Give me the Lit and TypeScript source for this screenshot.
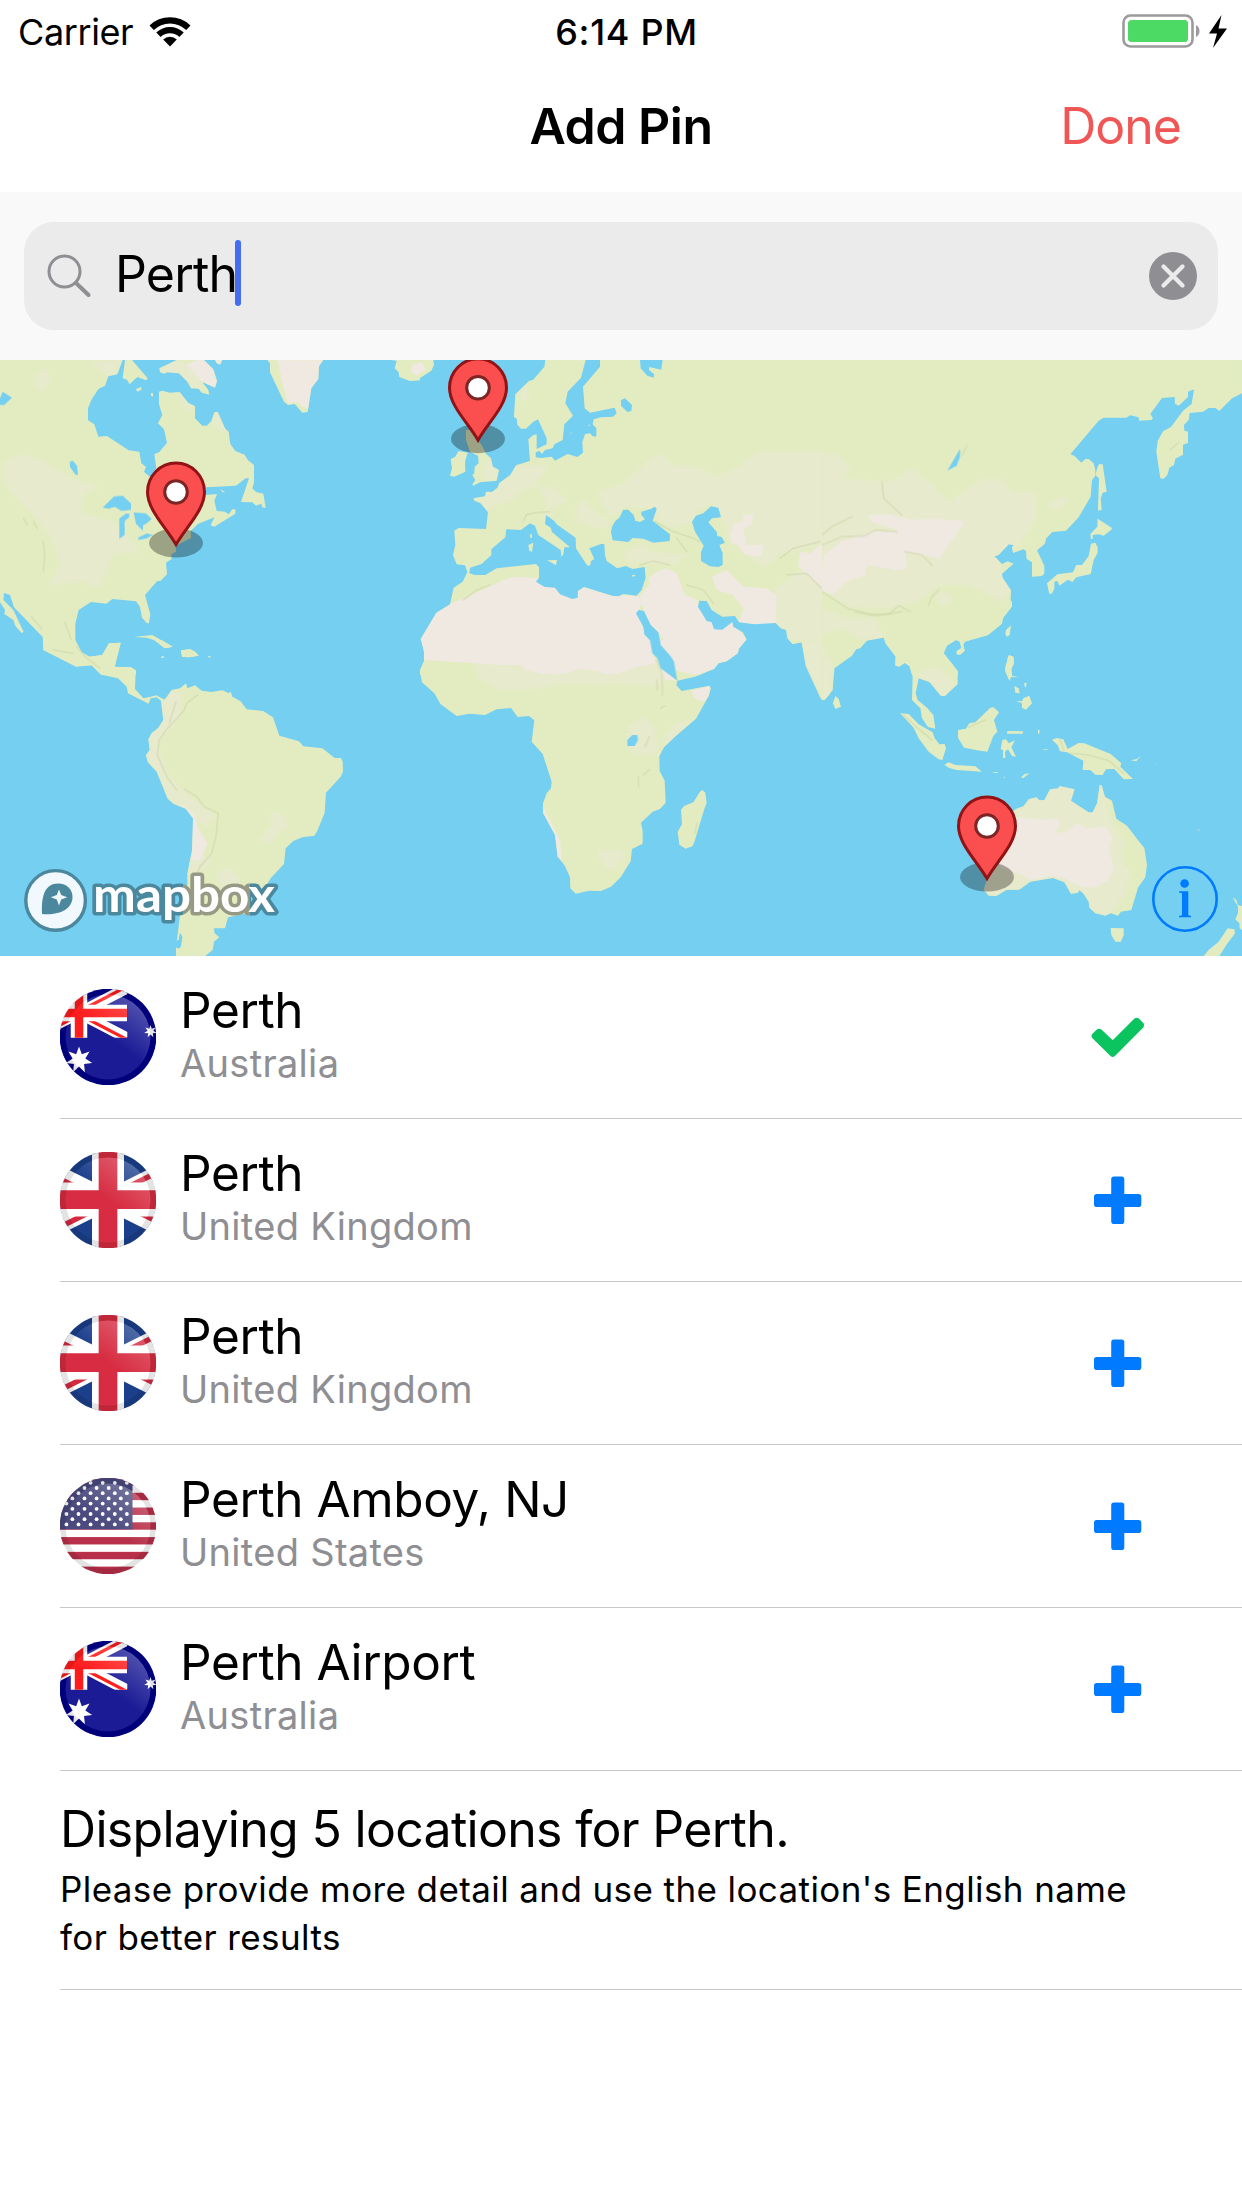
import { LitElement, html, svg, css } from "lit";
import { customElement, property, state } from "lit/decorators.js";

type Country = "au" | "gb" | "us";
interface Place {
  name: string;
  country: string;
  flag: Country;
  added: boolean;
}

/* ---------- map data: each tile is drawn at 3 units per pixel ---------- */
interface Tile {
  x: number;
  y: number;
  land: string[];
  pale?: string[];
  sand?: string[];
  water?: string[];
  isles?: string[];
  ridges?: string[];
}

const TILES: Tile[] = [
  {
    x: 0,
    y: 355,
    land: [
      "0,15 368,15 352,58 325,64 315,92 296,101 275,133 264,160 264,196 283,208 295,245 321,243 386,286 418,290 424,325 438,336 432,350 450,366 469,340 463,298 478,291 501,263 492,223 474,205 487,180 477,148 477,110 487,107 509,113 539,111 565,144 585,153 585,190 607,212 620,212 634,198 643,172 653,170 675,220 686,230 691,267 706,288 734,299 744,316 762,330 762,383 757,400 768,411 790,416 797,459 787,457 784,446 768,452 757,442 723,441 747,370 737,370 708,392 618,397 618,420 651,417 643,437 650,468 675,470 686,478 697,463 706,463 706,476 643,515 632,511 643,487 594,507 572,528 573,549 528,572 528,590 514,598 515,612 498,623 501,658 482,677 471,679 435,720 451,778 447,804 441,805 426,788 420,756 408,739 337,732 319,746 273,741 236,765 226,806 226,860 245,892 268,905 306,900 327,865 362,863 344,936 392,936 408,947 408,960 304,960 275,931 228,935 130,885 128,846 42,757 30,720 12,714 10,735 40,765 71,831 65,834 46,813 40,795 13,777 15,764 0,742",
      "375,15 396,15 443,70 438,76 412,66 389,88 381,74 368,70",
      "408,102 424,96 424,104 412,110",
      "453,114 459,114 459,125 453,122",
      "530,15 478,40 480,52 494,56 500,52 537,55 562,80 573,100 596,101 605,113 628,119 625,105 607,81 645,98 651,78 640,43 612,15",
      "645,15 650,25 660,29 667,15",
      "802,15 810,25 810,52 852,140 864,150 884,147 907,173 923,171 934,100 955,72 957,34 970,15",
      "1172,15 1190,17 1184,40 1196,52 1198,66 1230,78 1260,76 1260,15",
      "402,846 457,840 518,875 494,880 471,858 440,848",
      "543,886 571,883 585,890 596,902 565,907 546,905",
      "484,905 492,904 490,908 484,908",
      "625,904 633,905 632,907 625,907",
      "660,403 676,411 668,412",
    ],
    pale: [
      "270,15 365,15 350,58 320,62 300,45",
      "105,60 135,40 155,70 125,110 108,90",
      "10,320 60,295 125,315 215,370 300,395 250,420 240,470 340,500 420,590 340,600 300,700 240,680 150,690 180,620 150,540 100,480 40,420 10,380",
      "540,113 565,146 583,155 560,170 545,150",
      "643,172 653,170 675,220 684,235 655,222 636,212",
      "530,15 478,40 480,52 494,56 500,52 537,55 562,80 573,100 596,101 605,113 600,70 560,30",
    ],
    sand: [
      "560,30 590,15 612,15 640,43 651,78 645,98 607,81 580,50",
      "832,15 970,15 957,34 955,72 934,100 925,160 908,155 890,140 862,145 848,85",
      "1240,25 1260,20 1260,58 1236,50",
      "645,15 650,25 660,29 667,15",
    ],
    water: [
      "0,130 8,110 36,128 13,150 0,150",
      "209,320 219,318 231,333 234,360 226,358 210,336",
      "308,458 342,424 368,422 393,445 393,465 364,468 345,456 325,461",
      "358,490 378,475 389,477 387,487 374,498 374,540 358,552",
      "401,472 438,475 455,492 440,505 430,510 428,527 408,506",
      "414,548 440,535 459,540 440,550 416,555",
    ],
    ridges: ["130,560 134,600 130,650", "70,490 82,510", "100,500 112,520", "95,785 125,822", "195,803 212,850 245,895", "130,885 220,892"],
  },
  {
    x: 0,
    y: 640,
    land: [
      "130,0 130,30 228,79 275,76 304,104 354,115 380,140 384,160 446,191 452,175 470,172 483,182 490,240 474,265 455,279 445,298 449,330 438,345 443,366 470,395 503,476 520,491 557,506 579,535 576,632 562,700 562,735 548,765 537,850 531,900 528,902 536,900 540,878 547,890 543,920 535,926 528,922 528,948 615,948 638,930 642,905 658,892 644,880 642,865 675,865 684,832 740,820 755,795 757,765 800,735 812,715 852,672 857,625 880,603 907,592 943,587 952,572 974,518 978,458 1022,410 1029,395 1028,365 1023,354 1004,354 967,325 910,319 897,304 838,287 819,232 789,213 740,208 722,184 697,170 692,155 687,160 667,151 634,156 605,152 585,136 562,145 558,130 540,145 515,150 494,179 468,166 452,170 430,175 405,147 407,90 392,82 344,80 362,8 327,10 308,45 268,50 245,37 226,0",
      "462,0 485,0 518,20 494,25",
      "543,31 571,28 585,35 596,47 565,52 546,50",
      "484,50 492,49 490,53 484,53",
      "625,49 633,50 632,52 625,52",
    ],
    pale: [
      "775,600 810,560 815,510 845,520 865,560 830,585 810,615",
      "515,150 494,179 483,182 490,240 455,279 445,298 449,330 438,345 443,366 470,395 503,476 557,506 579,535 620,560 650,530 560,460 500,400 475,310 540,230 545,160",
      "650,700 690,680 720,720 700,760 660,740",
      "560,640 600,640 640,660 600,700 565,700",
    ],
    sand: ["520,491 557,506 579,535 576,632 574,662 600,660 622,610 595,565 585,528 557,500"],
    ridges: [
      "592,165 560,190 552,212 500,268 478,300 472,345 500,410 530,450",
      "528,185 508,248",
      "555,448 590,470 612,500 655,520 648,590 635,640 600,680 590,705",
      "160,30 220,40",
      "230,20 255,50 300,85",
    ],
  },
  {
    x: 410,
    y: 355,
    land: [
      "406,15 403,35 370,74 357,78 316,118 312,185 321,193 322,209 333,221 348,221 370,200 384,193 410,250 410,268 380,282 380,238 370,240 355,253 360,318 318,331 301,360 268,384 263,398 246,411 228,410 225,424 190,430 193,437 212,445 234,472 228,522 146,519 133,527 136,570 129,600 140,628 165,631 172,652 158,680 131,698 120,748 79,773 32,852 42,885 42,918 30,945 30,960 1260,960 1260,15",
      "0,77 20,76 64,47 72,30 70,15 0,15",
      "168,225 190,225 198,250 215,270 228,296 243,310 248,335 267,345 260,377 210,382 190,392 187,388 196,375 187,360 193,355 194,335 206,325 204,302 180,290 168,255",
      "122,312 135,306 146,288 173,293 165,320 166,350 133,365 120,362 126,340",
    ],
    pale: [
      "560,410 640,385 720,310 755,295 790,330 860,335 910,360 960,350 1040,290 1260,290 1260,560 1110,600 1060,640 960,560 930,480 900,450 860,470 850,500 790,520 740,495 740,460 690,460 650,455 600,490",
      "318,331 301,360 268,384 263,398 246,411 228,410 225,424 190,430 212,445 234,472 250,450 300,440 340,400 430,395 470,440 400,470 400,500 430,500 380,380 420,330",
      "325,115 345,90 358,110 352,135 335,140",
      "500,450 520,430 555,470 600,500 590,520 545,515 500,500",
      "640,590 700,565 720,590 830,600 800,630 700,625 650,620",
      "1080,800 1095,700 1180,640 1260,720 1260,960 1198,960 1184,905 1175,862 1148,867 1128,825 1097,804",
      "215,340 240,310 265,345 260,377 220,375",
    ],
    sand: [
      "120,748 210,708 280,675 315,665 378,670 387,668 378,680 403,695 435,698 450,718 487,732 503,728 504,707 522,696 607,722 680,722 700,740 678,775 700,815 703,838 722,858 727,895 742,915 740,925 680,935 620,957 560,947 510,943 460,958 400,957 350,945 360,895 330,930 270,935 150,922 100,915 42,915 42,885 32,852 79,773",
      "690,722 718,690 716,670 740,650 770,640 800,655 825,720 864,735 864,755 905,802 937,824 967,801 1010,853 987,895 950,918 925,925 872,958 835,960 790,900 752,840 722,810 702,768",
      "905,665 950,645 1000,695 1070,700 1100,725 1097,804 1033,808 987,802 1000,760 970,720 920,705",
      "960,540 970,510 1000,500 1000,480 1030,478 1025,510 1000,520 1010,570 1060,570 1055,605 1005,600 985,570 965,565",
      "1170,590 1200,595 1230,570 1260,570 1260,715 1215,680 1165,635",
      "5,30 35,22 48,42 20,62 3,50",
    ],
    water: [
      "527,15 513,68 473,110 466,145 489,182 463,208 458,255 433,268 428,280 405,285 396,297 388,288 377,292 377,307 393,309 425,305 435,317 473,297 502,306 519,293 517,262 525,237 540,235 547,243 559,245 559,220 548,208 551,193 573,187 609,185 620,175 614,158 540,173 524,160 519,95 570,35 570,15",
      "690,15 692,40 712,62 731,68 733,58 717,45 718,36 754,44 758,15",
      "633,135 645,130 666,150 664,168 652,171 633,152",
      "603,530 606,515 616,498 628,488 640,464 655,464 671,480 676,497 690,501 705,493 694,480 694,470 722,462 735,455 740,462 728,497 780,538 779,558 730,563 700,551 668,549 655,561 608,556",
      "846,500 858,482 880,475 903,454 925,458 933,487 906,490 895,502 920,530 922,543 935,546 945,563 928,570 938,595 938,630 925,636 900,634 873,618 873,592 881,572 855,530",
      "180,638 178,655 195,660 226,660 260,640 378,627 387,637 387,668 378,680 403,695 435,698 450,718 487,732 503,728 504,707 522,696 607,722 625,724 640,717 680,722 695,705 707,668 704,636 668,642 648,633 622,640 590,618 585,600 583,568 575,566 538,580 553,612 543,618 540,632 531,631 498,580 497,548 440,508 433,498 408,480 405,507 422,518 426,531 480,577 463,577 460,598 454,606 452,585 385,540 375,512 360,505 333,525 289,523 286,547 244,583 244,600 215,627",
      "678,775 686,765 702,768 722,810 745,832 752,870 785,910 798,960 778,960 750,935 742,910 727,895 722,858 703,838 700,815",
      "1200,960 1184,905 1175,862 1148,867 1132,850 1128,825 1112,820 1097,804 1033,808 987,802 975,783 937,785 905,765 890,738 868,737 864,755 890,798 905,802 912,823 937,824 967,801 970,815 998,832 1010,853 987,880 983,895 950,918 925,925 912,940 872,958 872,960",
    ],
    isles: [
      "360,538 365,537 366,549 361,549",
      "355,570 370,563 366,590 358,588",
      "412,616 441,615 438,631",
      "666,661 677,659 672,665 666,664",
      "480,235 485,232 484,236",
      "533,211 540,209 539,214",
    ],
    ridges: [
      "340,498 350,478 385,472 420,470",
      "160,735 200,705 240,690",
      "735,500 790,530 850,550 870,560",
      "800,550 830,590",
      "690,630 730,618 780,630",
      "830,690 880,705 910,745",
      "1110,610 1150,580 1230,560",
      "1130,660 1190,655 1240,705",
      "750,870 790,915",
    ],
  },
  {
    x: 410,
    y: 640,
    land: [
      "34,0 42,35 42,65 30,95 36,127 73,160 92,193 140,228 178,221 225,225 260,208 303,204 323,231 357,228 373,241 365,305 398,342 425,425 423,445 410,460 399,490 399,518 435,585 443,650 465,678 480,712 481,745 497,761 537,752 573,753 603,740 632,712 662,664 666,627 698,611 698,572 693,548 728,515 750,507 767,488 764,422 749,393 748,349 762,322 795,290 858,236 896,168 903,145 898,137 815,153 799,136 802,122 855,110 912,87 925,70 950,64 983,40 987,25 1008,0",
      "877,450 886,458 890,488 882,510 855,600 848,618 827,626 808,614 803,575 816,553 813,510 822,498 850,487 870,455",
      "1137,0 1148,12 1175,7 1187,77 1233,178 1243,180 1260,162 1260,0",
    ],
    pale: [
      "200,60 330,80 460,100 740,55 750,85 770,105 745,140 640,130 560,135 440,135 350,150 270,150 200,110",
      "655,260 700,230 735,265 745,345 690,345 650,320",
      "760,290 800,250 850,240 800,285 765,320",
      "565,630 640,630 640,660 600,695 570,660",
      "1180,0 1260,0 1260,120 1225,150 1187,77",
    ],
    sand: [
      "34,0 42,35 42,60 150,67 270,75 330,75 350,90 400,102 460,103 510,88 560,92 585,102 620,102 680,80 740,70 727,40 720,0",
      "750,0 752,15 783,50 792,90 855,105 912,87 925,70 950,64 983,40 987,25 1008,0",
      "752,85 768,120 800,122",
      "845,152 898,139 896,168 880,185 852,175",
      "400,490 399,518 435,585 443,650 455,660 450,600 430,560 405,515",
    ],
    water: [
      "720,0 727,40 742,55 752,85 802,122 792,65 783,50 752,15 750,0",
      "652,300 667,285 682,285 684,300 674,318 652,318",
    ],
    ridges: ["738,60 755,95 758,165", "740,120 742,150", "718,290 705,320", "685,410 685,440", "720,388 700,405", "752,205 765,198", "860,550 855,580"],
  },
  {
    x: 822,
    y: 355,
    land: [
      "0,15 1260,15 1260,115 1230,130 1192,168 1180,159 1160,159 1143,170 1103,174 1100,195 1086,210 1087,227 1098,230 1098,264 1083,269 1083,299 1060,311 1056,330 1042,338 1036,360 1024,372 1015,370 1003,290 1007,258 1023,229 1047,216 1083,167 1109,147 1116,103 1098,110 1098,126 1070,152 1059,146 1058,126 1020,129 985,177 993,190 988,195 951,197 950,187 925,181 913,188 845,188 830,197 745,298 757,302 778,323 790,312 800,312 815,325 820,345 820,362 810,375 806,425 770,487 732,527 691,531 673,550 668,567 645,586 667,632 667,655 660,663 630,665 630,622 614,612 612,588 605,583 573,594 570,578 575,570 560,568 530,600 517,604 540,627 557,619 575,626 540,656 541,667 567,706 566,735 570,742 570,755 543,790 540,806 498,841 428,860 423,870 428,887 413,899 404,897 405,888 418,880 413,860 402,855 375,872 365,895 407,948 408,960 270,960 262,933 248,923 232,935 220,932 221,905 190,865 185,848 127,858 115,880 102,883 90,902 37,940 36,960 0,960",
      "827,335 832,327 842,328 854,410 842,413 836,430 839,464 828,467 831,370 820,360",
      "827,491 870,519 868,524 845,542 830,538 812,540 812,552 807,552 805,537 826,515",
      "807,566 820,563 827,577 827,593 815,615 806,657 763,667 751,681 738,674 712,692 706,678 697,680 697,700 690,716 682,716 675,685 706,658 753,652 763,630 780,630 800,603",
      "567,811 563,840 555,845 550,838 552,825",
      "560,901 575,905 576,925 568,940 570,960 556,960 549,940",
    ],
    pale: [
      "0,290 50,300 85,345 60,370 200,380 270,340 310,370 380,440 480,370 540,370 570,410 600,410 640,410 645,490 600,560 573,580 530,600 545,660 567,706 545,740 480,710 440,690 350,690 290,740 200,760 80,755 0,705",
      "680,450 710,425 745,430 715,465 685,465",
      "0,760 80,790 160,790 185,848 127,858 60,820 0,840",
      "335,720 380,710 390,740 360,755",
      "280,880 340,880 365,900 350,950 290,940",
    ],
    sand: [
      "5,600 60,560 150,530 230,525 150,500 140,480 200,478 270,495 330,490 425,498 415,520 380,570 350,612 330,605 250,590 255,640 230,645 135,630 130,660 70,680 35,718 0,705 0,640",
    ],
    water: ["414,281 414,305 404,332 376,347"],
    ridges: [
      "0,540 30,515 90,485",
      "0,570 60,545 130,542 160,525 225,530",
      "0,710 80,762 150,778 200,778 230,752 265,770",
      "100,772 160,782 240,770",
      "320,750 330,725 350,705",
      "250,590 300,600 330,630",
      "180,380 185,430 240,480",
      "420,300 435,270",
      "1045,285 1070,262",
    ],
  },
  {
    x: 822,
    y: 640,
    land: [
      "0,0 137,0 117,22 103,27 90,45 37,83 32,150 8,180 0,180",
      "188,0 221,48 220,76 232,78 248,69 263,77 272,110 270,180 295,205 300,235 318,261 340,266 334,225 315,203 287,180 281,160 290,115 323,127 356,167 368,169 407,133 407,93 365,40 373,17 402,0",
      "413,0 421,12 418,25 404,33 404,43 415,44 428,32 424,15 428,5 443,0",
      "40,168 50,177 57,200 40,207 33,190",
      "234,220 260,222 290,253 332,277 338,295 352,313 368,312 372,325 361,360 350,358 320,335 290,295 275,263",
      "367,374 380,367 400,375 460,379 480,395 403,390 380,383",
      "408,270 432,266 442,250 460,247 505,203 515,202 531,217 516,240 526,275 514,288 496,335 474,332 426,323 408,293",
      "541,300 552,298 560,310 579,301 568,322 582,350 570,348 558,328 549,335 550,354 543,354 543,330 536,328",
      "556,273 603,274 602,281 555,281",
      "648,270 653,270 652,282 648,280",
      "658,328 676,327 676,330",
      "597,412 608,402 623,400 603,415",
      "514,396 528,397 528,399 514,399",
      "545,410 549,411 548,416",
      "563,46 573,50 576,70 567,90 570,107 590,112 568,111 562,122 549,92 555,70 558,50",
      "577,138 590,145 593,160 580,158",
      "607,128 614,130 612,142 608,140",
      "582,183 600,184 605,174 622,167 630,190 612,209 600,203 600,190",
      "690,300 703,294 724,298 737,327 770,309 787,310 866,342 898,370 895,380 933,417 905,418 877,387 852,388 842,405 820,404 805,390 782,390 784,362 735,337 714,334 707,315",
      "926,361 945,357 958,346 943,364",
      "580,508 605,498 620,478 643,472 652,481 667,480 684,448 709,445 712,438 758,448 747,482 800,517 812,517 825,490 833,435 839,436 849,470 870,482 883,536 915,557 940,590 967,624 975,675 970,712 948,743 928,810 897,815 888,827 866,820 850,827 820,820 802,803 800,785 785,762 772,750 768,758 747,762 727,727 693,714 625,725 592,749 553,750 523,768 500,767 485,750 495,718 490,640 560,530",
      "866,864 905,865 905,885 896,906 880,905 868,885",
      "1232,772 1243,780 1247,795 1260,798 1260,870 1253,865 1252,850 1240,838 1248,820 1248,800",
      "1217,865 1238,868 1238,882 1215,912 1192,948 1145,948 1160,930 1190,905",
      "1126,568 1134,570 1130,572",
      "999,369 1002,370 1000,372",
    ],
    pale: [
      "580,508 605,498 620,478 643,472 652,481 667,480 684,448 709,445 712,438 758,448 747,482 800,517 812,517 825,490 833,435 839,436 849,470 858,520 885,570 905,600 900,660 925,700 910,760 870,815 850,827 820,820 802,803 800,785 785,762 772,750 747,762 727,727 693,714 625,725 592,749 553,750 523,768 500,767 485,750 495,718 490,640 560,530",
      "0,15 32,80 32,150 8,180 0,180",
      "290,115 300,90 350,80 400,135 368,169 356,167 323,127",
    ],
    sand: [
      "560,540 600,533 680,540 710,535 712,560 690,580 735,575 765,548 790,565 850,560 870,590 860,630 875,680 860,720 820,742 780,740 727,715 693,708 625,720 600,705 560,690 530,680",
    ],
    ridges: ["745,340 800,345 860,362 905,400", "240,222 285,262 330,300", "440,262 490,240", "715,300 725,330"],
  },
];

const PINS = [
  { x: 176, y: 492 },
  { x: 478, y: 387.7 },
  { x: 987, y: 826 },
];

const star = (cx: number, cy: number, r: number, inner: number) =>
  Array.from({ length: 14 }, (_, i) => {
    const a = (Math.PI * i) / 7 - Math.PI / 2;
    const d = i % 2 ? r * inner : r;
    return `${(cx + d * Math.cos(a)).toFixed(2)},${(cy + d * Math.sin(a)).toFixed(2)}`;
  }).join(" ");

@customElement("world-map")
class WorldMap extends LitElement {
  static styles = css`
    :host { display: block; height: 596px; background: #75cff0; }
    svg { display: block; }
    .land { fill: #e3ecc1; }
    .pale { fill: #e8e9d1; opacity: 0.7; }
    .sand { fill: #f0e9e2; }
    .water { fill: #75cff0; }
    .ridge { fill: none; stroke: #cdd4a8; stroke-width: 5; stroke-linejoin: round; stroke-linecap: round; opacity: 0.5; }
    .wordmark { font: 700 48px Lato, "Open Sans", sans-serif; fill: #fff; stroke: url(#halo); stroke-width: 7px; paint-order: stroke; stroke-linejoin: round; }
  `;

  private shapes(list: string[] | undefined, cls: string) {
    return (list ?? []).map((p) => svg`<polygon class=${cls} points=${p}></polygon>`);
  }

  render() {
    return html`
      <svg width="1242" height="596" viewBox="0 360 1242 596" role="img" aria-label="World map">
        <defs>
          <linearGradient id="halo" gradientUnits="userSpaceOnUse" x1="90" y1="0" x2="280" y2="0">
            <stop offset="0.49" stop-color="#4b889d"></stop>
            <stop offset="0.49" stop-color="#969a84"></stop>
            <stop offset="0.84" stop-color="#969a84"></stop>
            <stop offset="0.84" stop-color="#4b889d"></stop>
          </linearGradient>
          <filter id="soft" x="-5%" y="-5%" width="110%" height="110%"><feGaussianBlur stdDeviation="5"></feGaussianBlur></filter>
          ${TILES.map(
            (t, i) => svg`<clipPath id=${"shore" + i}>${this.shapes(t.land, "")}</clipPath>
              <clipPath id=${"tile" + i}><rect width="1260" height="960"></rect></clipPath>`,
          )}
        </defs>
        ${TILES.map(
          (t, i) => svg`
          <g transform="translate(${t.x} ${t.y}) scale(0.33333)" clip-path=${`url(#tile${i})`}>
            ${this.shapes(t.land, "land")}
            <g clip-path=${`url(#shore${i})`}>
              <g filter="url(#soft)">${this.shapes(t.pale, "pale")}</g>
              ${this.shapes(t.sand, "sand")}
              ${(t.ridges ?? []).map((p) => svg`<polyline class="ridge" points=${p}></polyline>`)}
            </g>
            ${this.shapes(t.water, "water")}
            ${this.shapes(t.isles, "land")}
          </g>`,
        )}
        ${PINS.map(
          (p) => svg`
          <g transform="translate(${p.x} ${p.y})">
            <ellipse cx="0" cy="51" rx="27" ry="14.5" fill="#000" opacity="0.31"></ellipse>
            <path d="M0 52.5C-10 35-28.5 18-28.5 0a28.5 29 0 0 1 57 0C28.5 18 10 35 0 52.5z" fill="#fb4e4e" stroke="#911315" stroke-width="3"></path>
            <circle r="11.3" fill="#fff" stroke="#7d2424" stroke-width="3"></circle>
          </g>`,
        )}
        <g>
          <circle cx="55.6" cy="900.4" r="29.8" fill="#f1f9ff" stroke="#4b889d" stroke-width="3.4"></circle>
          <path d="M42 914C41 896 45 883.500 58 883.500c9 0 14.500 6 14.500 13.500 0 12-13 18.500-30.500 17z" fill="#4b889d"></path>
          <path d="M59 889.500l2.200 5.600 6 2.200-6 2.200-2.200 6-2.200-6-6-2.200 6-2.200z" fill="#f1f9ff"></path>
          <text class="wordmark" x="93" y="912" textLength="182" lengthAdjust="spacingAndGlyphs">mapbox</text>
        </g>
        <g fill="#007aff">
          <circle cx="1185" cy="899" r="31.700" fill="none" stroke="#007aff" stroke-width="2.600"></circle>
          <circle cx="1184.600" cy="883.500" r="4.300"></circle>
          <path d="M1179 891.300h9.300v24l2.700 0.600v1.300h-12v-1.300l3-0.600v-22l-3-0.700z"></path>
        </g>
      </svg>
    `;
  }
}

@customElement("country-flag")
class CountryFlag extends LitElement {
  @property() code: Country = "au";

  static styles = css`
    :host { display: block; width: 96px; height: 96px; }
    svg { display: block; }
  `;

  private australia() {
    return svg`
      <rect width="96" height="96" fill="#00008a"></rect>
      <circle cx="48" cy="48" r="42.500" fill="#1b1b96"></circle>
      <g clip-path="url(#canton)">
        <path d="M-29-1L67 49M-29 49L67-1" stroke="#fff" stroke-width="11"></path>
        <path d="M19 25.500L67 50.500M19 22.500L67-2.500M19 26L-29 51" stroke="#ff1a1a" stroke-width="3.200"></path>
        <path d="M19 0v49M0 24h67" stroke="#fff" stroke-width="16.500"></path>
        <path d="M19 0v49M0 24h67" stroke="#ff1c1c" stroke-width="8.500"></path>
      </g>
      <polygon points=${star(19, 71, 13.5, 0.48)} fill="#fff"></polygon>
      <polygon points=${star(90.5, 42.5, 6.5, 0.45)} fill="#fff"></polygon>`;
  }

  private britain() {
    return svg`
      <rect width="96" height="96" fill="#1c3f8c"></rect>
      <path d="M-48 0L144 96M-48 96L144 0" stroke="#fff" stroke-width="19"></path>
      <path d="M0 24v6l48 24v-6zM96 24v-6L48 42v6zM0 72v6l48-24v-6zM96 72v-6L48 42v6z" fill="#d42a40"></path>
      <path d="M48 0v96" stroke="#fff" stroke-width="32"></path>
      <path d="M0 47.500h96" stroke="#fff" stroke-width="34"></path>
      <path d="M48 0v96M0 47.700h96" stroke="#d72c41" stroke-width="18.700"></path>`;
  }

  private states() {
    const dots = [];
    for (let r = 0; r < 9; r++) {
      const odd = r % 2;
      for (let c = 0; c < (odd ? 5 : 6); c++) {
        dots.push(svg`<circle cx=${6.4 + c * 12.1 + odd * 6} cy=${4.8 + r * 5.2} r="1.900" fill="#fff"></circle>`);
      }
    }
    return svg`
      <rect width="96" height="96" fill="#fff"></rect>
      ${[0, 2, 4, 6, 8, 10, 12].map((n) => svg`<rect y=${n * 7.385} width="96" height="7.385" fill="#b8304a"></rect>`)}
      <rect width="72.500" height="51.300" fill="#4b4b80"></rect>
      ${dots}`;
  }

  render() {
    const art = this.code === "au" ? this.australia() : this.code === "gb" ? this.britain() : this.states();
    return html`
      <svg width="96" height="96" viewBox="0 0 96 96" aria-hidden="true">
        <defs>
          <clipPath id="disc"><circle cx="48" cy="48" r="48.300"></circle></clipPath>
          <clipPath id="canton"><rect width="67.300" height="48.700"></rect></clipPath>
          <linearGradient id="gloss" x1="0.2" y1="0.9" x2="0.8" y2="0.1">
            <stop offset="0.5" stop-color="#fff" stop-opacity="0"></stop>
            <stop offset="1" stop-color="#fff" stop-opacity="0.22"></stop>
          </linearGradient>
        </defs>
        <g clip-path="url(#disc)">
          ${art}
          <circle cx="48" cy="48" r="42.500" fill="url(#gloss)"></circle>
          <circle cx="48" cy="48" r="45.300" fill="none" stroke="#000" stroke-opacity="0.11" stroke-width="5.600"></circle>
        </g>
      </svg>
    `;
  }
}

@customElement("place-row")
class PlaceRow extends LitElement {
  @property({ attribute: false }) place!: Place;

  static styles = css`
    :host { display: block; padding-left: 60px; }
    .row { display: flex; align-items: center; height: 162px; border-bottom: 1px solid #c8c7cc; }
    .text { flex: 1; padding: 0 0 8px 24px; }
    .name { font-size: 49.5px; line-height: 60px; letter-spacing: -0.4px; color: #000; }
    .country { font-size: 38px; line-height: 46px; letter-spacing: 0.3px; color: #8e8e93; }
    .mark { display: block; margin-right: 94px; }
  `;

  render() {
    const p = this.place;
    return html`
      <div class="row">
        <country-flag .code=${p.flag}></country-flag>
        <div class="text">
          <div class="name">${p.name}</div>
          <div class="country">${p.country}</div>
        </div>
        <svg class="mark" width="60" height="60" viewBox="0 0 60 60" aria-hidden="true">
          ${p.added
            ? svg`<path d="M5.500 26.300l4.600-4.500q2.300-1.800 4.600 0L26 32.500 47.800 10.800q2.200-1.700 4.400 0l4.600 4.700q1.500 2 0 4L28 48.500q-2 1.500-4 0L5.500 30.300q-1.600-2 0-4z" transform="translate(-1.300 0.800)" fill="#0bc35f"></path>`
            : svg`<path transform="translate(-0.500 0)" d="M26.500 6.500h7.500q2.800 0 2.800 2.800v14.700h14.200q2.800 0 2.800 2.800v7.400q0 2.800-2.800 2.800H36.800v14.200q0 2.800-2.800 2.800h-7.500q-2.800 0-2.800-2.800V37H9.300q-2.800 0-2.800-2.800v-7.400q0-2.800 2.800-2.800h14.400V9.300q0-2.800 2.800-2.800z" fill="#007aff"></path>`}
        </svg>
      </div>
    `;
  }
}

@customElement("app-root")
class AppRoot extends LitElement {
  @state() private query = "Perth";
  @state() private places: Place[] = [
    { name: "Perth", country: "Australia", flag: "au", added: true },
    { name: "Perth", country: "United Kingdom", flag: "gb", added: false },
    { name: "Perth", country: "United Kingdom", flag: "gb", added: false },
    { name: "Perth Amboy, NJ", country: "United States", flag: "us", added: false },
    { name: "Perth Airport", country: "Australia", flag: "au", added: false },
  ];

  static styles = css`
    :host { display: block; width: 1242px; height: 2208px; overflow: hidden; background: #fff; color: #000; font-family: Inter, Roboto, "Liberation Sans", sans-serif; }
    .bar { display: grid; grid-template-columns: 1fr auto 1fr; align-items: center; }
    .status { height: 60px; padding: 0 14px 0 18px; font-size: 36px; line-height: 60px; }
    .carrier { display: flex; align-items: center; gap: 16px; }
    .carrier span { padding-top: 2px; letter-spacing: -0.4px; }
    .time { padding: 2px 0 0 7px; font-weight: 500; letter-spacing: 0.7px; }
    .power { display: flex; align-items: center; justify-content: flex-end; }
    .nav { height: 132px; padding: 0 61px; font-size: 50px; line-height: 132px; }
    .title { grid-column: 2; font-weight: 600; letter-spacing: -0.5px; }
    .done { justify-self: end; color: #ef5655; letter-spacing: -1px; }
    .search { height: 168px; padding: 30px 24px; box-sizing: border-box; background: #f9f9f9; }
    .field { display: flex; align-items: center; height: 108px; padding: 0 21px 0 22px; box-sizing: border-box; border-radius: 30px; background: #ebebec; }
    .query { margin: 0 -2px 3px 23px; font-size: 50px; line-height: 105px; letter-spacing: -0.8px; }
    .caret { width: 6px; height: 66px; margin: 0 auto 6px 0; border-radius: 3px; background: #446df0; }
    .summary { margin-left: 60px; padding: 28px 60px 28px 0; border-bottom: 1px solid #c8c7cc; }
    .count { margin-bottom: 6px; font-size: 50px; line-height: 60px; letter-spacing: -0.7px; }
    .hint { font-size: 35px; line-height: 48px; letter-spacing: 0.4px; }
    svg { display: block; flex: none; }
  `;

  render() {
    return html`
      <header class="bar status">
        <div class="carrier">
          <span>Carrier</span>
          <svg width="42" height="31" viewBox="0 0 42 31" aria-hidden="true">
            <path d="M0.500 9.500a29.500 29.500 0 0 1 41 0l-4.300 4.500a23.300 23.300 0 0 0-32.400 0z"></path>
            <path d="M7.300 16.500a19.800 19.800 0 0 1 27.400 0l-4.300 4.500a13.600 13.600 0 0 0-18.800 0z"></path>
            <path d="M14.200 23.500a9.900 9.900 0 0 1 13.600 0L21 30.500z"></path>
          </svg>
        </div>
        <div class="time">6:14 PM</div>
        <div class="power">
          <svg width="106" height="36" viewBox="1122 12 106 36" aria-hidden="true">
            <rect x="1123.500" y="14.500" width="69" height="31" rx="7" fill="none" stroke="#9b9b9b" stroke-width="2.600"></rect>
            <rect x="1128" y="19" width="60" height="22" rx="3.500" fill="#4cd964"></rect>
            <path d="M1196 24q3.500 2 3.500 6t-3.500 6z" fill="#9b9b9b"></path>
            <path d="M1221.500 14L1209 32.500h8L1213 47l14-19.500h-8.500z"></path>
          </svg>
        </div>
      </header>
      <nav class="bar nav">
        <div class="title">Add Pin</div>
        <div class="done">Done</div>
      </nav>
      <div class="search">
        <div class="field">
          <svg width="46" height="46" viewBox="46 252 46 46" fill="none" stroke="#8e8e93" stroke-linecap="round" aria-hidden="true">
            <circle cx="64.500" cy="270.500" r="15.500" stroke-width="3"></circle>
            <path d="M76 282l12.500 12" stroke-width="4"></path>
          </svg>
          <span class="query">${this.query}</span>
          <span class="caret"></span>
          <svg width="48" height="48" viewBox="0 0 48 48" aria-hidden="true">
            <circle cx="24" cy="24" r="24" fill="#8e8e93"></circle>
            <path d="M14.500 14.500l19 19M33.500 14.500l-19 19" stroke="#ebebec" stroke-width="4.300" stroke-linecap="round"></path>
          </svg>
        </div>
      </div>
      <world-map></world-map>
      <main>
        ${this.places.map((p) => html`<place-row .place=${p}></place-row>`)}
        <section class="summary">
          <div class="count">Displaying ${this.places.length} locations for ${this.query}.</div>
          <div class="hint">Please provide more detail and use the location's English name<br />for better results</div>
        </section>
      </main>
    `;
  }
}
